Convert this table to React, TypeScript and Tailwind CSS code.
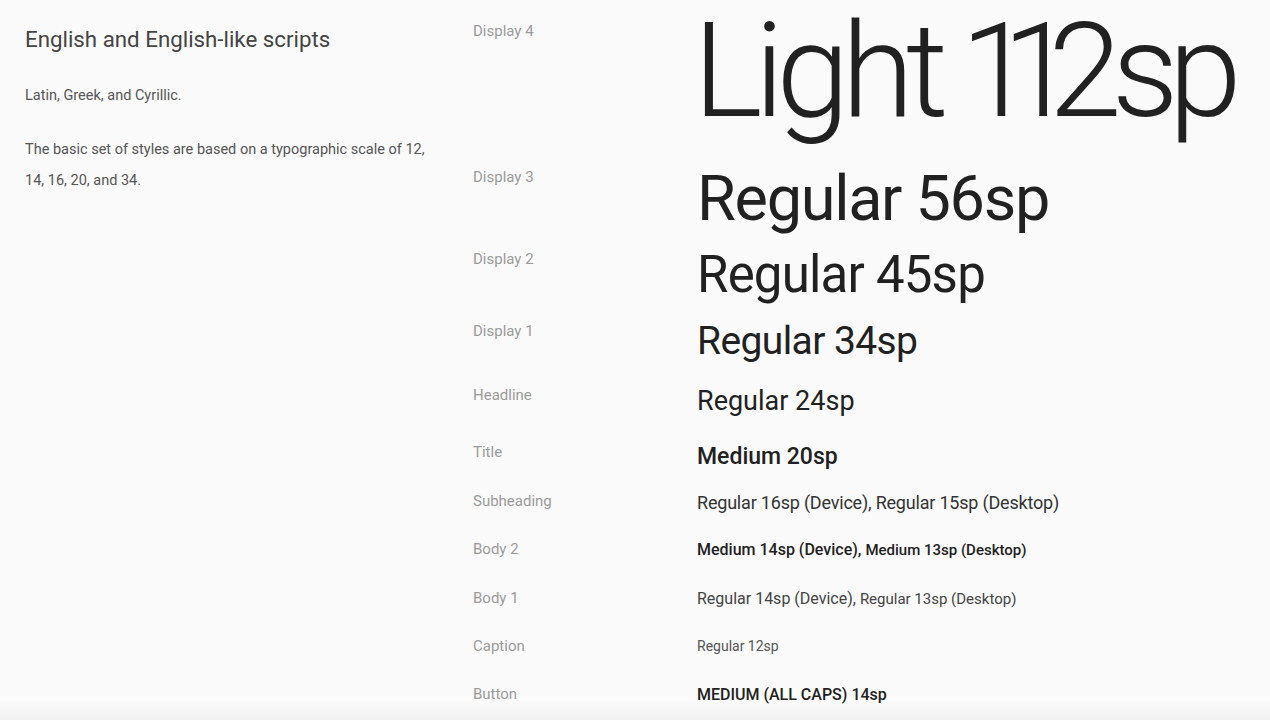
import React from "react";

const font = { fontFamily: "Roboto, 'Noto Sans', sans-serif" };

type Row = {
  label: string;
  h: string;
  labelMt: string;
  sampleMt: string;
  sample: React.ReactNode;
};

const rows: Row[] = [
  {
    label: "Display 4",
    h: "h-[167px]",
    labelMt: "mt-[24px]",
    sampleMt: "mt-[5px] -ml-[4px]",
    sample: (
      <span className="text-[132px] font-light leading-none tracking-[-8px] proportional-nums">
        Light <span className="tracking-[-16px]">11</span>
        <span className="tracking-[-10px]">2sp</span>
      </span>
    ),
  },
  {
    label: "Display 3",
    h: "h-[82px]",
    labelMt: "mt-[3px]",
    sampleMt: "mt-0",
    sample: <span className="text-[63px] font-normal leading-none tracking-[-1.3px]">Regular 56sp</span>,
  },
  {
    label: "Display 2",
    h: "h-[72px]",
    labelMt: "mt-[3px]",
    sampleMt: "mt-0",
    sample: <span className="text-[51px] font-normal leading-none tracking-[-0.8px]">Regular 45sp</span>,
  },
  {
    label: "Display 1",
    h: "h-[64px]",
    labelMt: "mt-[3px]",
    sampleMt: "mt-[1px]",
    sample: <span className="text-[39px] font-normal leading-none tracking-[-0.6px]">Regular 34sp</span>,
  },
  {
    label: "Headline",
    h: "h-[57px]",
    labelMt: "mt-[3px]",
    sampleMt: "mt-[3px]",
    sample: <span className="text-[27px] font-normal leading-none">Regular 24sp</span>,
  },
  {
    label: "Title",
    h: "h-[49px]",
    labelMt: "mt-[3px]",
    sampleMt: "mt-[3px]",
    sample: <span className="text-[23px] font-medium leading-none">Medium 20sp</span>,
  },
  {
    label: "Subheading",
    h: "h-[48px]",
    labelMt: "mt-[3px]",
    sampleMt: "mt-[1px]",
    sample: (
      <span className="text-[18px] font-normal leading-none tracking-[-0.2px] text-[#333]">
        Regular 16sp (Device), Regular 15sp (Desktop)
      </span>
    ),
  },
  {
    label: "Body 2",
    h: "h-[49px]",
    labelMt: "mt-[3px]",
    sampleMt: "-mt-[1px]",
    sample: (
      <span className="font-medium leading-none text-[#222]">
        <span className="text-[16px]">Medium 14sp (Device), </span>
        <span className="text-[15px]">Medium 13sp (Desktop)</span>
      </span>
    ),
  },
  {
    label: "Body 1",
    h: "h-[48px]",
    labelMt: "mt-[3px]",
    sampleMt: "-mt-[1px]",
    sample: (
      <span className="font-normal leading-none text-[#444]">
        <span className="text-[16px]">Regular 14sp (Device), </span>
        <span className="text-[15px]">Regular 13sp (Desktop)</span>
      </span>
    ),
  },
  {
    label: "Caption",
    h: "h-[48px]",
    labelMt: "mt-[3px]",
    sampleMt: "-mt-[2px]",
    sample: <span className="text-[14px] font-normal leading-none text-[#555]">Regular 12sp</span>,
  },
  {
    label: "Button",
    h: "h-[48px]",
    labelMt: "mt-[3px]",
    sampleMt: "-mt-[1px]",
    sample: <span className="text-[16px] font-medium leading-none text-[#222]">MEDIUM (ALL CAPS) 14sp</span>,
  },
];

export default function App() {
  return (
    <div
      style={font}
      className="w-[1270px] h-[720px] overflow-hidden flex bg-[linear-gradient(to_bottom,#fafafa_0px,#fafafa_702px,#f1f1f1_720px)] text-[#212121]"
    >
      <div className="w-[473px] shrink-0 pl-[25px] pt-[28px]">
        <h1 className="text-[22.3px] leading-none font-normal text-[#444]">
          English and English-like scripts
        </h1>
        <p className="mt-[39px] text-[14.5px] leading-none text-[#555]">Latin, Greek, and Cyrillic.</p>
        <p className="mt-[30px] w-[420px] text-[14.5px] leading-[31px] text-[#555]">
          The basic set of styles are based on a typographic scale of 12, 14, 16, 20, and 34.
        </p>
      </div>
      <div className="flex-1 flex flex-col">
        {rows.map((r) => (
          <div key={r.label} className={`flex items-start shrink-0 ${r.h}`}>
            <div className={`w-[224px] shrink-0 text-[15px] leading-none text-[#9a9a9a] ${r.labelMt}`}>
              {r.label}
            </div>
            <div className={`whitespace-nowrap ${r.sampleMt}`}>{r.sample}</div>
          </div>
        ))}
      </div>
    </div>
  );
}
